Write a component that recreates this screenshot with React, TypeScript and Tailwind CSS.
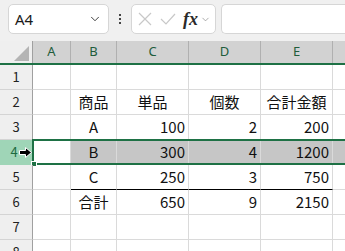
import { ChevronDown } from 'lucide-react';

type Row = {
  n: number;
  cells: [string, string, string, string, string];
};

const rows: Row[] = [
  { n: 1, cells: ['', '', '', '', ''] },
  { n: 2, cells: ['', '商品', '単品', '個数', '合計金額'] },
  { n: 3, cells: ['', 'A', '100', '2', '200'] },
  { n: 4, cells: ['', 'B', '300', '4', '1200'] },
  { n: 5, cells: ['', 'C', '250', '3', '750'] },
  { n: 6, cells: ['', '合計', '650', '9', '2150'] },
  { n: 7, cells: ['', '', '', '', ''] },
  { n: 8, cells: ['', '', '', '', ''] },
];

const colW = ['w-[38px]', 'w-[46px]', 'w-[72px]', 'w-[72px]', 'w-[72px]'];
const letters = ['A', 'B', 'C', 'D', 'E'];

// 見出し行(2行目)と文字はセンター、数値は右寄せ
function align(r: Row, i: number) {
  if (i === 1 || r.n === 2) return 'justify-center';
  return 'justify-end pr-[3px]';
}

function FormulaBar() {
  return (
    <div className="h-[41px] bg-[#f0f0f0] flex items-start pt-[4px] pl-[8px] gap-0">
      <div className="w-[101px] h-[30px] bg-white border border-[#d6d6d6] rounded-[5px] flex items-center pl-[6px] pr-[6px]">
        <span className="text-[15px] text-[#1a1a1a] flex-1">A4</span>
        <ChevronDown size={14} strokeWidth={1.6} className="text-[#333]" />
      </div>
      <div className="w-[22px] h-[30px] flex flex-col items-center justify-center gap-[2px]">
        <span className="w-[2px] h-[2px] bg-[#444]" />
        <span className="w-[2px] h-[2px] bg-[#444]" />
        <span className="w-[2px] h-[2px] bg-[#444]" />
      </div>
      <div className="w-[85px] h-[30px] bg-white border border-[#d6d6d6] rounded-[5px] flex items-center pl-[5px]">
        <svg width="14" height="14" viewBox="0 0 14 14" className="ml-[1px]">
          <path d="M1 1 L13 13 M13 1 L1 13" stroke="#c8c8c8" strokeWidth="1.2" fill="none" />
        </svg>
        <svg width="16" height="14" viewBox="0 0 16 14" className="ml-[8px]">
          <path d="M1 7 L6 12 L15 2" stroke="#c8c8c8" strokeWidth="1.2" fill="none" />
        </svg>
        <span
          className="ml-[7px] text-[18px] italic font-bold text-[#2a2a2a] leading-none"
          style={{ fontFamily: '"Liberation Serif", serif' }}
        >
          fx
        </span>
        <ChevronDown size={11} strokeWidth={1.5} className="text-[#888] ml-[2px]" />
      </div>
      <div className="ml-[5px] flex-1 h-[30px] bg-white border border-[#d6d6d6] rounded-l-[5px] border-r-0" />
    </div>
  );
}

function HeaderRow() {
  return (
    <div className="flex h-[24px] border-b-2 border-[#1e7145] bg-[#d2d2d2]">
      <div className="w-[33px] shrink-0 bg-[#efefef] border-r border-[#a0a0a0] relative">
        <div className="absolute right-[3px] bottom-[2px] w-0 h-0 border-l-[15px] border-l-transparent border-b-[15px] border-b-[#b4b4b4]" />
      </div>
      {letters.map((l, i) => (
        <div
          key={l}
          className={`${colW[i]} shrink-0 border-r border-[#b0b0b0] flex items-center justify-center text-[13px] text-[#215c3b]`}
        >
          {l}
        </div>
      ))}
      <div className="flex-1" />
    </div>
  );
}

export default function App() {
  return (
    <div className="w-[345px] h-[251px] overflow-hidden bg-white" style={{ fontFamily: '"Noto Sans", "Noto Sans CJK JP", sans-serif' }}>
      <FormulaBar />
      <HeaderRow />
      <div style={{ fontFamily: '"Noto Sans CJK JP", sans-serif' }}>
        {rows.map((r) => {
          const sel = r.n === 4;
          return (
            <div key={r.n} className={`flex h-[25px] relative ${sel ? 'bg-[#c6c6c6]' : ''}`}>
              <div
                className={`w-[33px] shrink-0 border-r border-[#a0a0a0] border-b flex items-center justify-center text-[13px] ${
                  sel ? 'bg-[#9fd5b7] text-[#1d6b40] border-b-[#9fd5b7]' : 'bg-[#efefef] text-[#222] border-b-[#d4d4d4]'
                }`}
              >
                <span className={sel ? 'ml-[-4px]' : ''}>{r.n}</span>
              </div>
              {r.cells.map((c, i) => (
                <div
                  key={i}
                  className={`${colW[i]} shrink-0 border-r border-b border-[#dadada] flex items-center text-[15px] text-[#111] ${align(r, i)} ${
                    sel && i === 0 ? 'bg-white' : ''
                  } ${r.n === 6 && i > 0 ? 'border-t border-t-black -mt-px' : ''}`}
                >
                  {c}
                </div>
              ))}
              <div className="flex-1 border-b border-[#dadada]" />
              {sel && (
                <>
                  {/* 選択範囲の枠 */}
                  <div className="absolute left-[32px] right-[-4px] top-[-1px] bottom-0 border-2 border-[#1e7145] pointer-events-none" />
                  <div className="absolute left-[31px] bottom-[-2px] w-[6px] h-[6px] bg-[#1e7145] border border-white" />
                  {/* マウスカーソル(右向き矢印) */}
                  <svg width="13" height="11" viewBox="0 0 13 11" className="absolute left-[19px] top-[7px]">
                    <path d="M0.5 3.5 H6.5 V0.5 L12.5 5.5 L6.5 10.5 V7.5 H0.5 Z" fill="#000" stroke="#fff" strokeWidth="1" />
                  </svg>
                </>
              )}
            </div>
          );
        })}
      </div>
    </div>
  );
}
